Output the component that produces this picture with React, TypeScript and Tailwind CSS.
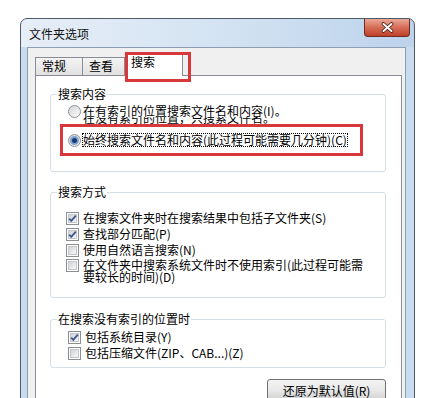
import React from 'react';

function Radio({ checked }: { checked?: boolean }) {
  return (
    <span className="flex h-[13px] w-[13px] shrink-0 items-center justify-center rounded-full border border-[#8e8f8f] bg-linear-to-br from-[#d3d5d8] to-[#fdfdfd]">
      {checked && <span className="h-[5px] w-[5px] rounded-full bg-[#1d3a70] ring-2 ring-[#7aa3d6]" />}
    </span>
  );
}

function CheckBox({ checked }: { checked?: boolean }) {
  return (
    <span className="relative flex h-[13px] w-[13px] shrink-0 items-center justify-center border border-[#8e8f8f] bg-white">
      <span className="h-[9px] w-[9px] border border-[#c4c7cb] bg-linear-to-br from-[#d2d4d8] to-[#f8f8f8]" />
      {checked && (
        <svg className="absolute inset-0" width="11" height="11" viewBox="0 0 11 11">
          <path d="M2.2 5.6 L4.3 7.8 L8.8 2.6" fill="none" stroke="#40598f" strokeWidth="1.9" />
        </svg>
      )}
    </span>
  );
}

function CheckRow({ checked, label }: { checked?: boolean; label: string }) {
  return (
    <div className="flex h-[16px] items-center gap-[4px]">
      <CheckBox checked={checked} />
      <span className="leading-[12px]">{label}</span>
    </div>
  );
}

function Group({ title, className, children }: { title: string; className?: string; children: React.ReactNode }) {
  return (
    <fieldset className={`rounded-[3px] border border-[#d5dfe5] ${className ?? ''}`}>
      <legend className="ml-[6px] px-[1px] leading-[12px]">{title}</legend>
      {children}
    </fieldset>
  );
}

export default function App() {
  return (
    <div className="h-[398px] w-[437px] overflow-hidden bg-white pl-[20px] pt-[18px] font-['Noto_Sans_CJK_SC',sans-serif] text-[12px] leading-[12px] text-black">
      <div className="w-[395px] rounded-t-[7px] border border-[#4f5a68] bg-linear-to-r from-[#e6eef7] via-[#d4e3f2] to-[#bcd3ec]">
        {/* title bar */}
        <div className="flex h-[28px] items-start justify-between">
          <span className="ml-[8px] mt-[9px] leading-[12px] text-[#111]">文件夹选项</span>
          <div className="mr-[4px] flex h-[18px] w-[46px] items-center justify-center rounded-b-[4px] border border-t-0 border-[#6e2c22] bg-linear-to-b from-[#eaa898] via-[#d56c56] to-[#bf3f28]">
            <svg width="13" height="11" viewBox="0 0 13 11">
              <path d="M2.5 2 L10.5 9 M10.5 2 L2.5 9" stroke="#4a1c14" strokeWidth="3.6" strokeLinecap="round" />
              <path d="M2.5 2 L10.5 9 M10.5 2 L2.5 9" stroke="#ffffff" strokeWidth="2" strokeLinecap="round" />
            </svg>
          </div>
        </div>

        <div className="flex">
          <div className="w-[6px] bg-[#c9dbef]" />
          <div className="h-[360px] w-[379px] border border-[#8d9db2] bg-[#f0f0f0] pl-[7px] pr-[3px] pt-[4px]">
            {/* tabs */}
            <div className="relative z-10 -mb-px flex h-[24px] items-end">
              <div className="mb-px h-[18px] w-[48px] border border-b-0 border-[#898c95] bg-linear-to-b from-[#f4f4f4] to-[#e1e1e1] pl-[6px] pt-[2px]">
                常规
              </div>
              <div className="mb-px h-[18px] w-[42px] border-r border-t border-[#898c95] bg-linear-to-b from-[#f4f4f4] to-[#e1e1e1] pl-[6px] pt-[2px]">
                查看
              </div>
              <div className="h-[24px] w-[58px] border border-b-0 border-[#898c95] bg-white pl-[5px] pt-[3px]">
                搜索
              </div>
              <div className="pointer-events-none absolute left-[90px] top-0 h-[30px] w-[66px] border-[3px] border-[#d8383a]" />
            </div>

            {/* tab page */}
            <div className="h-[340px] border border-[#898c95] bg-white pl-[14px] pr-[15px] pt-[12px]">
              <Group title="搜索内容">
                <div className="pb-[15px] pt-[5px]">
                  <div className="flex items-start gap-[2px] pl-[17px]">
                    <span className="mt-[0px]">
                      <Radio />
                    </span>
                    <div>
                      <div className="leading-[12px]">在有索引的位置搜索文件名和内容(I)。</div>
                      <div className="h-[7px] overflow-hidden">
                        <div className="-mt-[5px] leading-[12px]">在没有索引的位置，只搜索文件名。</div>
                      </div>
                    </div>
                  </div>
                  <div className="ml-[9px] w-[303px] border-[3px] border-[#d8383a] py-[6px] pl-[5px]">
                    <div className="flex items-center gap-[1px]">
                      <Radio checked />
                      <span className="border border-dotted border-black leading-[12px]">
                        始终搜索文件名和内容(此过程可能需要几分钟)(C)
                      </span>
                    </div>
                  </div>
                </div>
              </Group>

              <Group title="搜索方式" className="mt-[14px]">
                <div className="pb-[14px] pl-[15px] pt-[12px]">
                  <CheckRow checked label="在搜索文件夹时在搜索结果中包括子文件夹(S)" />
                  <CheckRow checked label="查找部分匹配(P)" />
                  <CheckRow label="使用自然语言搜索(N)" />
                  <div className="flex items-start gap-[4px] pt-[1px]">
                    <CheckBox />
                    <span className="leading-[12px]">
                      在文件夹中搜索系统文件时不使用索引(此过程可能需
                      <br />
                      要较长的时间)(D)
                    </span>
                  </div>
                </div>
              </Group>

              <Group title="在搜索没有索引的位置时" className="mt-[15px]">
                <div className="pb-[6px] pl-[17px] pt-[4px]">
                  <CheckRow checked label="包括系统目录(Y)" />
                  <CheckRow label="包括压缩文件(ZIP、CAB...)(Z)" />
                </div>
              </Group>

              <div className="mt-[11px] flex justify-end">
                <button className="h-[23px] w-[119px] rounded-[3px] border border-[#707070] bg-linear-to-b from-[#f3f3f3] via-[#e8e8e8] to-[#d0d0d0] leading-[12px]">
                  还原为默认值(R)
                </button>
              </div>
            </div>
          </div>
          <div className="w-[8px] bg-[#c9dbef]" />
        </div>
      </div>
    </div>
  );
}
